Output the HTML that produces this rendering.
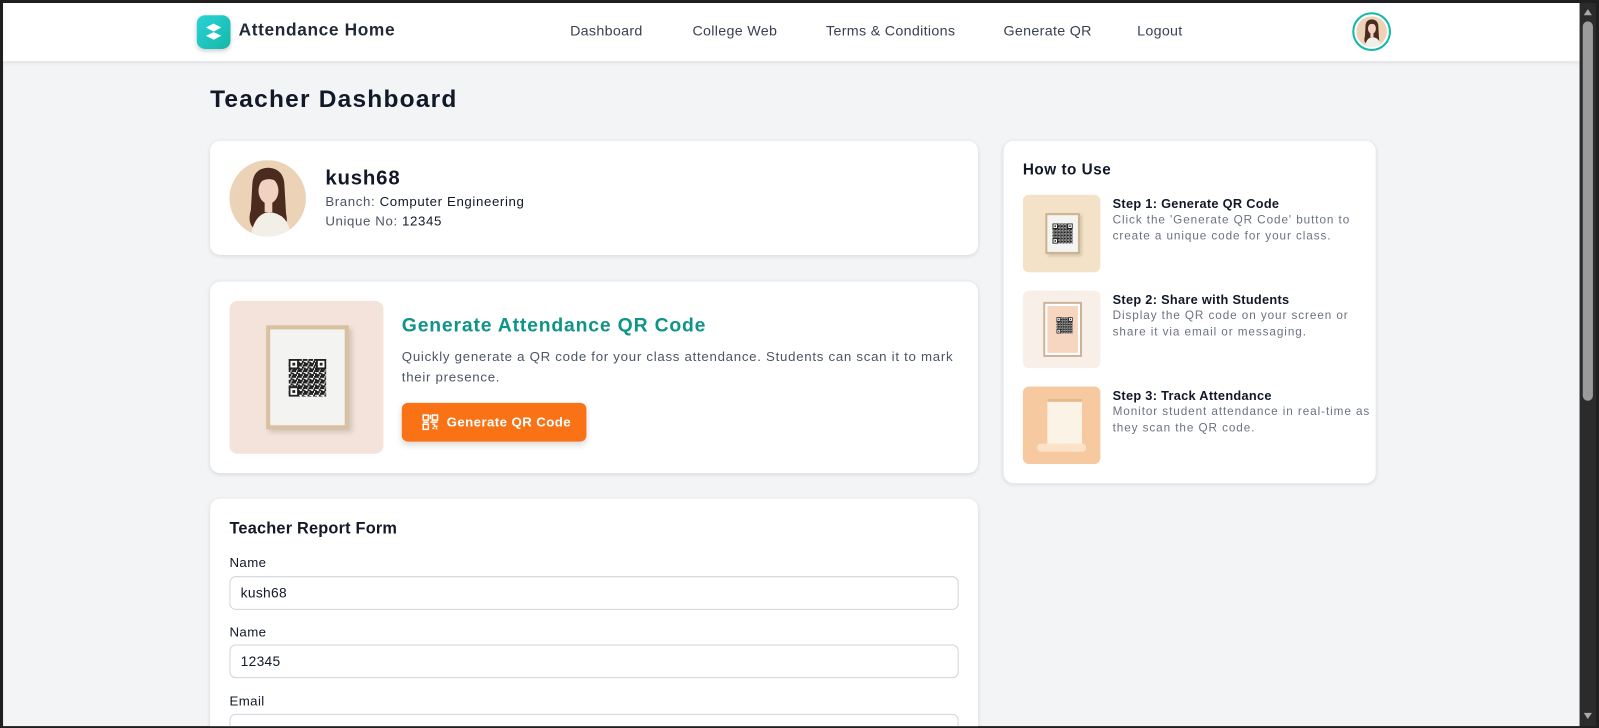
<!DOCTYPE html>
<html><head><meta charset="utf-8">
<style>
*{box-sizing:border-box;margin:0;padding:0}
html,body{width:1599px;height:728px;overflow:hidden;background:#1f1f1f;font-family:"Liberation Sans",Arial,sans-serif;color:#111827}
#wrap{position:absolute;left:0;top:0;width:1568px;height:714px;transform:scale(1.0198);transform-origin:0 0}
#vp{position:absolute;left:3px;top:3px;width:1546px;height:709px;background:#f3f4f6;overflow:hidden}
#sb{position:absolute;left:1549px;top:3px;width:16px;height:709px;background:#2b2b2b}
#thumb{position:absolute;left:3px;top:18px;width:10px;height:372px;background:#9b9b9b;border-radius:5px}
.nav{position:absolute;left:0;top:0;width:1546px;height:57px;background:#fff;box-shadow:0 2px 4px rgba(0,0,0,.1)}
.abs{position:absolute}
.card{position:absolute;background:#fff;border-radius:10px;box-shadow:0 1px 4px rgba(0,0,0,.12)}
.nl{position:absolute;top:19px;font-size:14px;color:#374151;letter-spacing:.3px}
.step h4{font-size:12.5px;font-weight:bold;color:#111827;letter-spacing:.3px}
.step p{font-size:11.5px;color:#6b7280;line-height:16px;margin-top:1px;letter-spacing:.9px;white-space:nowrap}
label{position:absolute;font-size:13px;color:#111827;letter-spacing:.4px}
.inp{position:absolute;left:19px;width:715px;height:33px;border:1px solid #d1d5db;border-radius:6px;font-size:13.5px;padding:8px 10px;color:#111827;letter-spacing:.3px}
</style></head><body>
<svg width="0" height="0" style="position:absolute"><defs>
<pattern id="qr" width="6" height="6" patternUnits="userSpaceOnUse"><rect width="6" height="6" fill="#fff"/><rect x="0" y="0" width="2" height="2" fill="#222"/><rect x="3" y="0" width="3" height="2" fill="#222"/><rect x="2" y="2" width="2" height="2" fill="#222"/><rect x="0" y="4" width="3" height="2" fill="#222"/><rect x="4" y="3" width="2" height="3" fill="#222"/></pattern>
<symbol id="qrs" viewBox="0 0 40 40"><rect width="40" height="40" fill="url(#qr)"/><g fill="none" stroke="#222" stroke-width="2"><rect x="1" y="1" width="9" height="9" fill="#fff"/><rect x="30" y="1" width="9" height="9" fill="#fff"/><rect x="1" y="30" width="9" height="9" fill="#fff"/></g><rect x="4" y="4" width="3" height="3" fill="#222"/><rect x="33" y="4" width="3" height="3" fill="#222"/><rect x="4" y="33" width="3" height="3" fill="#222"/></symbol>
<symbol id="av" viewBox="0 0 100 100"><rect width="100" height="100" fill="#ecd3b8"/><path d="M30 30 Q32 10 52 10 Q72 12 72 35 L74 70 Q78 88 66 90 L36 92 Q22 85 28 65 Z" fill="#4a2b1d"/><ellipse cx="51" cy="40" rx="13" ry="17" fill="#f1d2c0"/><path d="M38 32 Q46 20 64 28 L62 24 Q50 14 38 26Z" fill="#4a2b1d"/><path d="M28 100 Q32 70 52 68 Q78 70 80 100Z" fill="#f2efe8"/><rect x="46" y="54" width="10" height="14" fill="#f1d2c0"/></symbol>
</defs></svg>
<div id="wrap">
<div id="vp">
 <div class="nav">
  <div class="abs" style="left:190px;top:12px;width:33px;height:33px;border-radius:8px;background:linear-gradient(135deg,#2bd3d8,#14b8a6);box-shadow:0 2px 4px rgba(0,0,0,.2)">
   <svg width="33" height="33" viewBox="0 0 33 33"><path d="M9 12 L16.5 8 L24 12 L16.5 16Z" fill="#fff"/><path d="M9 20 L16.5 16.5 L24 20 L16.5 24Z" fill="#fff"/></svg></div>
  <div class="abs" style="left:231px;top:17px;font-size:17px;font-weight:bold;color:#1f2937;letter-spacing:.6px">Attendance Home</div>
  <div class="nl" style="left:556px">Dashboard</div>
  <div class="nl" style="left:676px">College Web</div>
  <div class="nl" style="left:807px">Terms &amp; Conditions</div>
  <div class="nl" style="left:981px">Generate QR</div>
  <div class="nl" style="left:1112px">Logout</div>
  <div class="abs" style="left:1323px;top:9px;width:38px;height:38px;border-radius:50%;border:2px solid #14b8a6;padding:2px;background:#fff"><svg width="30" height="30" style="border-radius:50%;display:block"><use href="#av"/></svg></div>
 </div>
 <div class="abs" style="left:203px;top:81px;font-size:24px;font-weight:bold;color:#111827;letter-spacing:1.2px">Teacher Dashboard</div>

 <div class="card" style="left:203px;top:135px;width:753px;height:112px">
  <svg class="abs" style="left:19px;top:19px;border-radius:50%" width="75" height="75"><use href="#av"/></svg>
  <div class="abs" style="left:113px;top:26px;font-size:20px;font-weight:bold;letter-spacing:.8px">kush68</div>
  <div class="abs" style="left:113px;top:52px;font-size:13px;color:#4b5563;letter-spacing:.6px">Branch: <span style="color:#111827">Computer Engineering</span></div>
  <div class="abs" style="left:113px;top:71px;font-size:13px;color:#4b5563;letter-spacing:.6px">Unique No: <span style="color:#111827">12345</span></div>
 </div>

 <div class="card" style="left:203px;top:273px;width:753px;height:188px">
  <div class="abs" style="left:19px;top:19px;width:151px;height:150px;border-radius:8px;background:#f4e3da">
   <div class="abs" style="left:36px;top:24px;width:81px;height:102px;background:#d8c0a0;padding:4px;box-shadow:3px 3px 5px rgba(0,0,0,.15)"><div style="width:73px;height:94px;background:#f3f3f1;position:relative"><svg style="position:absolute;left:18px;top:29px" width="37" height="37"><use href="#qrs"/></svg></div></div>
  </div>
  <div class="abs" style="left:188px;top:33px;font-size:19px;font-weight:bold;color:#0f9488;letter-spacing:.8px">Generate Attendance QR Code</div>
  <div class="abs" style="left:188px;top:64px;width:560px;font-size:13px;line-height:20px;color:#4b5563;letter-spacing:.7px;white-space:nowrap">Quickly generate a QR code for your class attendance. Students can scan it to mark<br>their presence.</div>
  <div class="abs" style="left:188px;top:119px;width:181px;height:38px;border-radius:6px;background:#f97316;box-shadow:0 3px 6px rgba(0,0,0,.15);color:#fff;font-size:13px;font-weight:bold;padding:11px 0 0 44px;letter-spacing:.4px">Generate QR Code
   <svg class="abs" style="left:20px;top:11px" width="16" height="16" viewBox="0 0 16 16" fill="none" stroke="#fff" stroke-width="1.5"><rect x="1" y="1" width="5" height="5"/><rect x="10" y="1" width="5" height="5"/><rect x="1" y="10" width="5" height="5"/><path d="M10 10h2v2h3M10 14h2M14 13v2M8 1v4M8 8h7M1 8h5"/></svg></div>
 </div>

 <div class="card" style="left:203px;top:486px;width:753px;height:240px">
  <div class="abs" style="left:19px;top:21px;font-size:16px;font-weight:bold;letter-spacing:.2px">Teacher Report Form</div>
  <label style="left:19px;top:55px">Name</label>
  <div class="inp" style="top:76px">kush68</div>
  <label style="left:19px;top:123px">Name</label>
  <div class="inp" style="top:143px">12345</div>
  <label style="left:19px;top:191px">Email</label>
  <div class="inp" style="top:211px"></div>
 </div>

 <div class="card" style="left:981px;top:135px;width:365px;height:336px">
  <div class="abs" style="left:19px;top:20px;font-size:15px;font-weight:bold;letter-spacing:.5px">How to Use</div>
  <div class="abs" style="left:19px;top:53px;width:76px;height:76px;border-radius:6px;background:#f3e2c8"><div class="abs" style="left:22px;top:18px;width:34px;height:40px;background:#cdb38f;padding:2px;box-shadow:2px 2px 3px rgba(0,0,0,.15)"><div style="width:30px;height:36px;background:#f4f4f2;position:relative"><svg style="position:absolute;left:5px;top:8px" width="20" height="20"><use href="#qrs"/></svg></div></div></div>
  <div class="abs step" style="left:107px;top:55px"><h4>Step 1: Generate QR Code</h4><p>Click the 'Generate QR Code' button to<br>create a unique code for your class.</p></div>
  <div class="abs" style="left:19px;top:147px;width:76px;height:76px;border-radius:6px;background:#f8efe9"><div class="abs" style="left:20px;top:11px;width:38px;height:54px;background:#c9b49a;padding:2px"><div style="width:34px;height:50px;background:#f7d6c0;border:2px solid #fff;position:relative"><svg style="position:absolute;left:9px;top:11px" width="16" height="16"><use href="#qrs"/></svg></div></div></div>
  <div class="abs step" style="left:107px;top:149px"><h4>Step 2: Share with Students</h4><p>Display the QR code on your screen or<br>share it via email or messaging.</p></div>
  <div class="abs" style="left:19px;top:241px;width:76px;height:76px;border-radius:6px;background:#f7c9a0;overflow:hidden"><div class="abs" style="left:24px;top:12px;width:34px;height:46px;background:#faf3e6;border-top:3px solid #e8b88a"></div><div class="abs" style="left:14px;top:56px;width:48px;height:8px;border-radius:4px;background:#fbe2c9"></div></div>
  <div class="abs step" style="left:107px;top:243px"><h4>Step 3: Track Attendance</h4><p>Monitor student attendance in real-time as<br>they scan the QR code.</p></div>
 </div>
</div>
<div id="sb"><div id="thumb"></div>
 <svg class="abs" style="left:3px;top:5px" width="10" height="8"><path d="M1 7L5 1L9 7Z" fill="#aaa"/></svg>
 <svg class="abs" style="left:3px;top:695px" width="10" height="8"><path d="M1 1L5 7L9 1Z" fill="#aaa"/></svg>
</div>
</div>
</body></html>
